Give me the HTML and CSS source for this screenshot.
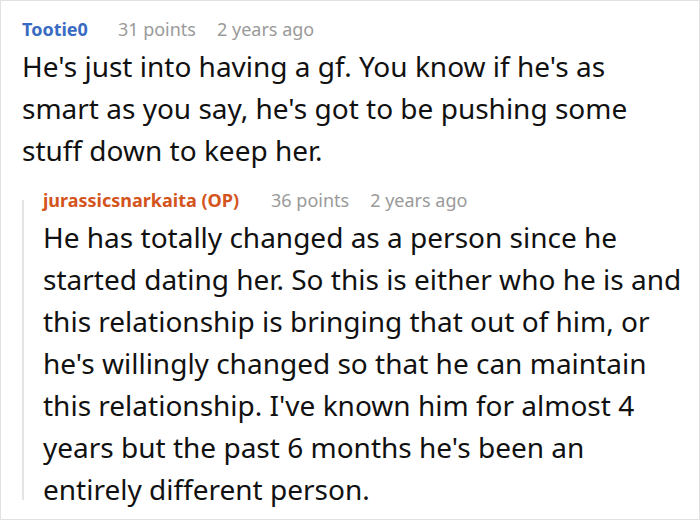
FILE: index.html
```html
<!DOCTYPE html>
<html>
<head>
<meta charset="utf-8">
<link rel="stylesheet" href="styles.css">
</head>
<body>
<div class="thread">
  <div class="comment">
    <div class="meta">
      <span class="author">Tootie0</span>
      <span class="info">31 points</span>
      <span class="info">2 years ago</span>
    </div>
    <div class="body">He's just into having a gf. You know if he's as smart as you say, he's got to be pushing some stuff down to keep her.</div>
    <div class="reply">
      <div class="meta">
        <span class="author op">jurassicsnarkaita (OP)</span>
        <span class="info">36 points</span>
        <span class="info">2 years ago</span>
      </div>
      <div class="body">He has totally changed as a person since he started dating her. So this is either who he is and this relationship is bringing that out of him, or he's willingly changed so that he can maintain this relationship. I've known him for almost 4 years but the past 6 months he's been an entirely different person.</div>
    </div>
  </div>
</div>
</body>
</html>
```

FILE: styles.css
```css
html, body {
  margin: 0;
  padding: 0;
  background: #ffffff;
}
.thread {
  box-sizing: border-box;
  width: 700px;
  height: 520px;
  border: 1px solid #e2e2e2;
  overflow: hidden;
  font-family: "Noto Sans", "Open Sans", sans-serif;
  color: #111111;
}
.comment {
  padding: 16px 13px 0 21px;
}
.meta {
  display: flex;
  gap: 21px;
  font-size: 18px;
  line-height: 24px;
  white-space: nowrap;
}
.author {
  color: #3a6bc2;
  font-weight: 700;
  margin-right: 9px;
}
.author.op {
  color: #d4541d;
  margin-right: 11px;
}
.info {
  color: #9a9a9a;
}
.body {
  margin-top: 4px;
  font-size: 28px;
  line-height: 42px;
}
.comment > .body {
  margin-right: 30px;
}
.reply {
  margin-top: 17px;
  padding-left: 21px;
  background: linear-gradient(#e4e4e4, #e4e4e4) left 12px / 2px calc(100% - 22px) no-repeat;
}
```
